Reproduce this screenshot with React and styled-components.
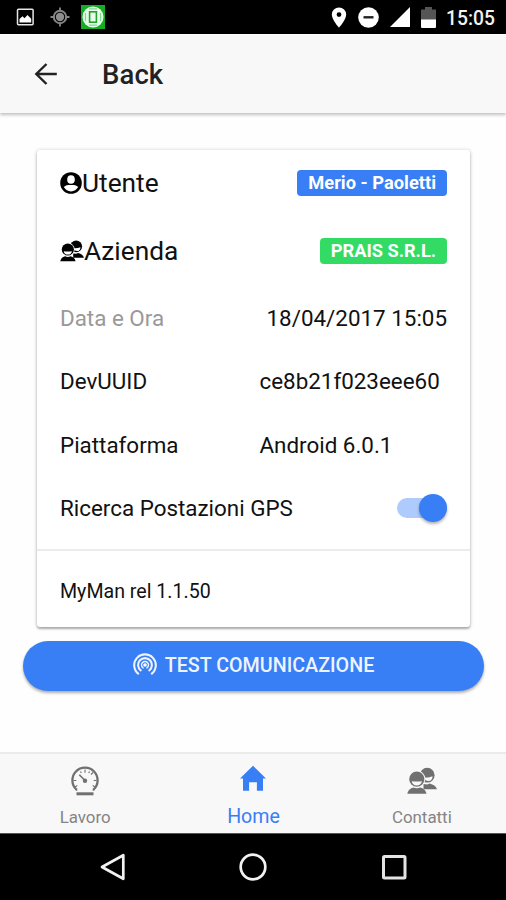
import React from 'react';
import styled, { createGlobalStyle } from 'styled-components';

const GlobalStyle = createGlobalStyle`
  * {
    box-sizing: border-box;
  }
  body {
    margin: 0;
    background: #fff;
    color: #111;
    font-family: Roboto, "Liberation Sans", sans-serif;
  }
`

const Screen = styled.div`
  display: flex;
  flex-direction: column;
  width: 506px;
  height: 900px;
  overflow: hidden;
  background: #fefefe;
`

const StatusBar = styled.div`
  display: flex;
  justify-content: space-between;
  align-items: center;
  flex: none;
  height: 34px;
  padding: 0 11px 0 16px;
  background: #000;
  color: #fff;
`

const StatusGroup = styled.div`
  display: flex;
  align-items: center;
  gap: ${props => props.gap};
`

const Clock = styled.span`
  margin-left: -1px;
  font-size: 19.3px;
  font-weight: 500;
  line-height: 32px;
  color: #f2f2f2;
  padding-top: 3px;
`

const Header = styled.header`
  display: flex;
  align-items: center;
  flex: none;
  gap: 43px;
  height: 79px;
  padding: 0 33px;
  border-top: 1px solid #fff;
  background: #f8f8f8;
  box-shadow: 0 2px 3px rgba(0, 0, 0, 0.24);
`

const Title = styled.h1`
  margin: 0;
  font-size: 27.5px;
  font-weight: 500;
  letter-spacing: 0.1px;
  color: #222;
`

const Content = styled.main`
  flex: 1;
  padding: 37px 22px 0 23px;
`

const Card = styled.section`
  margin: 0 14px;
  height: 477px;
  border-radius: 3px;
  background: #fff;
  box-shadow: 0 2px 2px rgba(0, 0, 0, 0.24), 0 0 4px rgba(0, 0, 0, 0.1),
    0 1px 4px rgba(0, 0, 0, 0.12);
`

const Row = styled.div`
  display: flex;
  align-items: center;
  height: ${props => props.height || '63.3px'};
  padding: 0 23px;
`

const Heading = styled.h2`
  display: flex;
  align-items: center;
  flex: 1;
  margin: 0;
  font-size: 26.3px;
  font-weight: 400;
`

const Badge = styled.span`
  height: 26px;
  padding: 0 11px;
  border-radius: 4px;
  background: ${props => props.color};
  color: #fff;
  font-size: ${props => props.size};
  font-weight: 700;
  line-height: 25px;
`

const Label = styled.span`
  width: ${props => props.width || '199.5px'};
  flex: none;
  font-size: 22.4px;
  color: ${props => (props.muted ? '#999' : '#111')};
`

const Value = styled.span`
  flex: 1;
  font-size: 22.4px;
  text-align: ${props => props.align || 'left'};
  white-space: nowrap;
`

const Track = styled.div`
  display: flex;
  align-items: center;
  justify-content: flex-end;
  width: 50px;
  height: 20px;
  margin: 0 0 0 auto;
  border-radius: 10px;
  background: #afcbfd;
`

const Knob = styled.div`
  flex: none;
  width: 28px;
  height: 28px;
  border-radius: 50%;
  background: #387ef5;
  box-shadow: 0 2px 3px rgba(0, 0, 0, 0.3);
`

const Release = styled.div`
  display: flex;
  align-items: center;
  height: 77px;
  margin-top: 9.4px;
  padding: 5px 23px 0;
  border-top: 2px solid #ececec;
  font-size: 19.6px;
`

const TestButton = styled.button`
  display: flex;
  justify-content: center;
  align-items: center;
  gap: 8px;
  width: 100%;
  height: 50px;
  margin-top: 14px;
  padding: 0 0 2px;
  border: 0;
  border-radius: 25px;
  background: #387ef5;
  box-shadow: 0 2px 3px rgba(0, 0, 0, 0.32);
  color: #eef4ff;
  font-family: inherit;
  font-size: 19.7px;
  font-weight: 500;
`

const Tabs = styled.nav`
  display: grid;
  grid-template-columns: repeat(3, 1fr);
  flex: none;
  height: 81px;
  padding-left: 1px;
  border-top: 2px solid #ebebeb;
  background: #f8f8f8;
`

const Tab = styled.a`
  display: flex;
  flex-direction: column;
  align-items: center;
  padding-top: ${props => (props.active ? '10px' : '12px')};
  gap: ${props => (props.active ? '11px' : '9px')};
  color: ${props => (props.active ? '#387ef5' : '#707070')};
  font-size: ${props => (props.active ? '19.6px' : '16.9px')};
  line-height: 24px;

  span {
    opacity: ${props => (props.active ? 1 : 0.85)};
  }
`

const NavBar = styled.div`
  display: flex;
  justify-content: center;
  align-items: center;
  flex: none;
  gap: 112.5px;
  height: 67px;
  padding-bottom: 1px;
  background: #000;
  border-top: 1px solid #555;
`

const Svg = styled.svg`
  display: block;
  flex: none;
`

const AppBadge = styled(Svg)`
  margin-left: -4px;
`

const ImageIcon = () => (
  <Svg width="19" height="18" viewBox="0 0 19 18">
    <rect x="1.5" y="1.2" width="15.6" height="15.6" rx="1" fill="none" stroke="#e6e6e6" strokeWidth="1.5" />
    <path d="M3.5 14.5V11l3-2.8 2 2 3-3.2 3.7 3.7v3.8z" fill="#fff" />
  </Svg>
)

const TargetIcon = () => (
  <Svg width="20" height="20" viewBox="0 0 20 20">
    <circle cx="10" cy="10" r="6.2" fill="none" stroke="#858585" strokeWidth="2" />
    <circle cx="10" cy="10" r="4.2" fill="#8d8d8d" />
    <path d="M10 .5v4M10 15.5v4M.5 10h4M15.5 10h4" stroke="#858585" strokeWidth="1.8" />
  </Svg>
)

const AppIcon = () => (
  <AppBadge width="24" height="24" viewBox="0 0 24 24">
    <rect width="24" height="24" fill="#16ad26" />
    <circle cx="12" cy="12" r="10.5" fill="#e6ffe9" />
    <rect x="8.6" y="6.8" width="6.8" height="10.4" fill="#e6ffe9" stroke="#2a9d35" strokeWidth="1.6" />
    <path d="M4.5 8v8M19.5 8v8M8 3.8h8M8 20.2h8" stroke="#7ddc87" strokeWidth="1.2" />
  </AppBadge>
)

const PinIcon = () => (
  <Svg width="16" height="21" viewBox="0 0 16 21">
    <path fillRule="evenodd" d="M8 .4a7.2 7.2 0 0 0-7.2 7.2C.8 13 8 20.7 8 20.7S15.2 13 15.2 7.6A7.2 7.2 0 0 0 8 .4zm0 4.8a2.4 2.4 0 1 1 0 4.8 2.4 2.4 0 0 1 0-4.8z" fill="#fff" />
  </Svg>
)

const DndIcon = () => (
  <Svg width="21" height="21" viewBox="0 0 21 21">
    <circle cx="10.5" cy="10.5" r="10.3" fill="#fff" />
    <path d="M5.5 10.3h10" stroke="#222" strokeWidth="2.4" />
  </Svg>
)

const SignalIcon = () => (
  <Svg width="20" height="20" viewBox="0 0 20 20">
    <path d="M0 20L20 0v20z" fill="#fff" />
  </Svg>
)

const BatteryIcon = () => (
  <Svg width="15" height="21" viewBox="0 0 15 21">
    <path d="M0 2.4h4V0h7v2.4h4V13H0z" fill="#555" />
    <path d="M0 12.5h15V20a1 1 0 0 1-1 1H1a1 1 0 0 1-1-1z" fill="#fff" />
  </Svg>
)

const ArrowIcon = () => (
  <Svg width="26" height="24" viewBox="0 0 26 24">
    <path d="M13.5 2L3.3 12l10.2 10M3.3 12h20.5" fill="none" stroke="#222" strokeWidth="2.4" />
  </Svg>
)

const ContactIcon = () => (
  <Svg width="22" height="22" viewBox="0 0 22 22">
    <circle cx="11" cy="11" r="10.8" fill="#000" />
    <ellipse cx="11" cy="7.5" rx="3.8" ry="4.3" fill="#fff" />
    <path d="M3.8 15.1c2-2.2 4.3-2.1 7.2-2.1s5.2-.1 7.2 2.1c-1.6 2.8-4.2 4.4-7.2 4.4s-5.6-1.6-7.2-4.4z" fill="#fff" />
  </Svg>
)

// two heads with shoulders, the rear one half hidden
const ContactsIcon = ({ width, height, color, face }) => (
  <Svg width={width} height={height} viewBox="0 0 30 27">
    <circle cx="20.2" cy="7.7" r="7.4" fill={color} />
    <path d="M16.500 9.800c2.600.6 6.200.2 9-1.100.1 3-1.500 4.900-4 4.900-2.400 0-4.300-1.300-5-3.800z" fill={face} />
    <path d="M16.5 21.8H30c-1.3-3.4-3.4-4.7-7.3-5.8l-2.5 1-3.7-.5z" fill={color} />
    <circle cx="9.8" cy="11.6" r="8.500" fill={face} />
    <circle cx="9.8" cy="11.6" r="7.600" fill={color} />
    <path d="M4.700 13.700c3 .5 7.200.5 10.200 0-.3 2.600-2.300 4.200-5.100 4.200s-4.800-1.600-5.100-4.200z" fill={face} />
    <path d="M.3 26.2c1.1-3.9 2.9-5 6-6.1 2.2 1 4.8 1 7 0 3.2 1.1 5.2 2.2 6.2 6.1z" fill={color} />
  </Svg>
)

const PodcastIcon = () => (
  <Svg width="24" height="24" viewBox="0 0 24 24">
    <g fill="none" stroke="#eef4ff" strokeWidth="2.1" strokeLinecap="round">
      <path d="M5.2 20.6a10.8 10.8 0 1 1 13.6 0" />
      <path d="M7.7 17.4a6.9 6.9 0 1 1 8.6 0" />
      <path d="M10.1 14.9a3.5 3.5 0 1 1 3.8 0" strokeWidth="1.4" />
    </g>
    <circle cx="12" cy="12" r="1.8" fill="#fff" />
  </Svg>
)

const SpeedometerIcon = () => (
  <Svg width="30" height="30" viewBox="0 0 30 30">
    <g fill="none" stroke="#707070">
      <path d="M7.3 23.6h-.8a12.600 12.600 0 1 1 17 0h-.8" strokeWidth="2.3" />
      <path d="M15 3.5v3.2M3.5 14.5h2.8M23.7 14.5h2.8M21 8.5l2-2M5 21l2.3-1.5M25 21l-2.3-1.5M10.5 5.5l.8 1.6M19.5 5.5l-.8 1.6" strokeWidth="1.1" />
      <path d="M9.3 8.7L15 14.5" strokeWidth="1.6" />
      <path d="M6.5 27.8h17" strokeWidth="3" />
    </g>
    <circle cx="15" cy="14.7" r="2.2" fill="#707070" />
  </Svg>
)

const HomeIcon = () => (
  <Svg width="28" height="30" viewBox="0 0 28 30">
    <path d="M14 1.8L27 14.4h-3v12.4h-6.1v-8.5h-7.8v8.5H4V14.4H1z" fill="#387ef5" />
  </Svg>
)

const BackKey = () => (
  <Svg width="28" height="28" viewBox="0 0 28 28">
    <path d="M24.3 2.2v23.6L3 14z" fill="none" stroke="#f2f2f2" strokeWidth="2.7" strokeLinejoin="round" />
  </Svg>
)

const HomeKey = () => (
  <Svg width="28" height="28" viewBox="0 0 28 28">
    <circle cx="14" cy="14" r="12.3" fill="none" stroke="#f2f2f2" strokeWidth="2.7" />
  </Svg>
)

const RecentKey = () => (
  <Svg width="28" height="28" viewBox="0 0 28 28">
    <rect x="3.5" y="3.5" width="21.5" height="21.5" rx="1" fill="none" stroke="#e4e4e4" strokeWidth="3" />
  </Svg>
)

const App = () => (
  <Screen>
    <GlobalStyle />
    <StatusBar>
      <StatusGroup gap="15px">
        <ImageIcon />
        <TargetIcon />
        <AppIcon />
      </StatusGroup>
      <StatusGroup gap="11px">
        <PinIcon />
        <DndIcon />
        <SignalIcon />
        <BatteryIcon />
        <Clock>15:05</Clock>
      </StatusGroup>
    </StatusBar>
    <Header>
      <ArrowIcon />
      <Title>Back</Title>
    </Header>
    <Content>
      <Card>
        <Row height="65px">
          <Heading><ContactIcon />Utente</Heading>
          <Badge color="#387ef5" size="18.3px">Merio - Paoletti</Badge>
        </Row>
        <Row height="72px">
          <Heading><ContactsIcon width="24" height="22" color="#000" face="#fff" />Azienda</Heading>
          <Badge color="#32db64" size="18.2px">PRAIS S.R.L.</Badge>
        </Row>
        <Row height="62.6px">
          <Label muted>Data e Ora</Label>
          <Value align="right">18/04/2017 15:05</Value>
        </Row>
        <Row>
          <Label>DevUUID</Label>
          <Value>ce8b21f023eee60</Value>
        </Row>
        <Row>
          <Label>Piattaforma</Label>
          <Value>Android 6.0.1</Value>
        </Row>
        <Row height="63.6px">
          <Label width="auto">Ricerca Postazioni GPS</Label>
          <Track><Knob /></Track>
        </Row>
        <Release>MyMan rel 1.1.50</Release>
      </Card>
      <TestButton><PodcastIcon />TEST COMUNICAZIONE</TestButton>
    </Content>
    <Tabs>
      <Tab>
        <SpeedometerIcon />
        <span>Lavoro</span>
      </Tab>
      <Tab active>
        <HomeIcon />
        <span>Home</span>
      </Tab>
      <Tab>
        <ContactsIcon width="30" height="30" color="#707070" face="#f8f8f8" />
        <span>Contatti</span>
      </Tab>
    </Tabs>
    <NavBar>
      <BackKey />
      <HomeKey />
      <RecentKey />
    </NavBar>
  </Screen>
)

export default App
